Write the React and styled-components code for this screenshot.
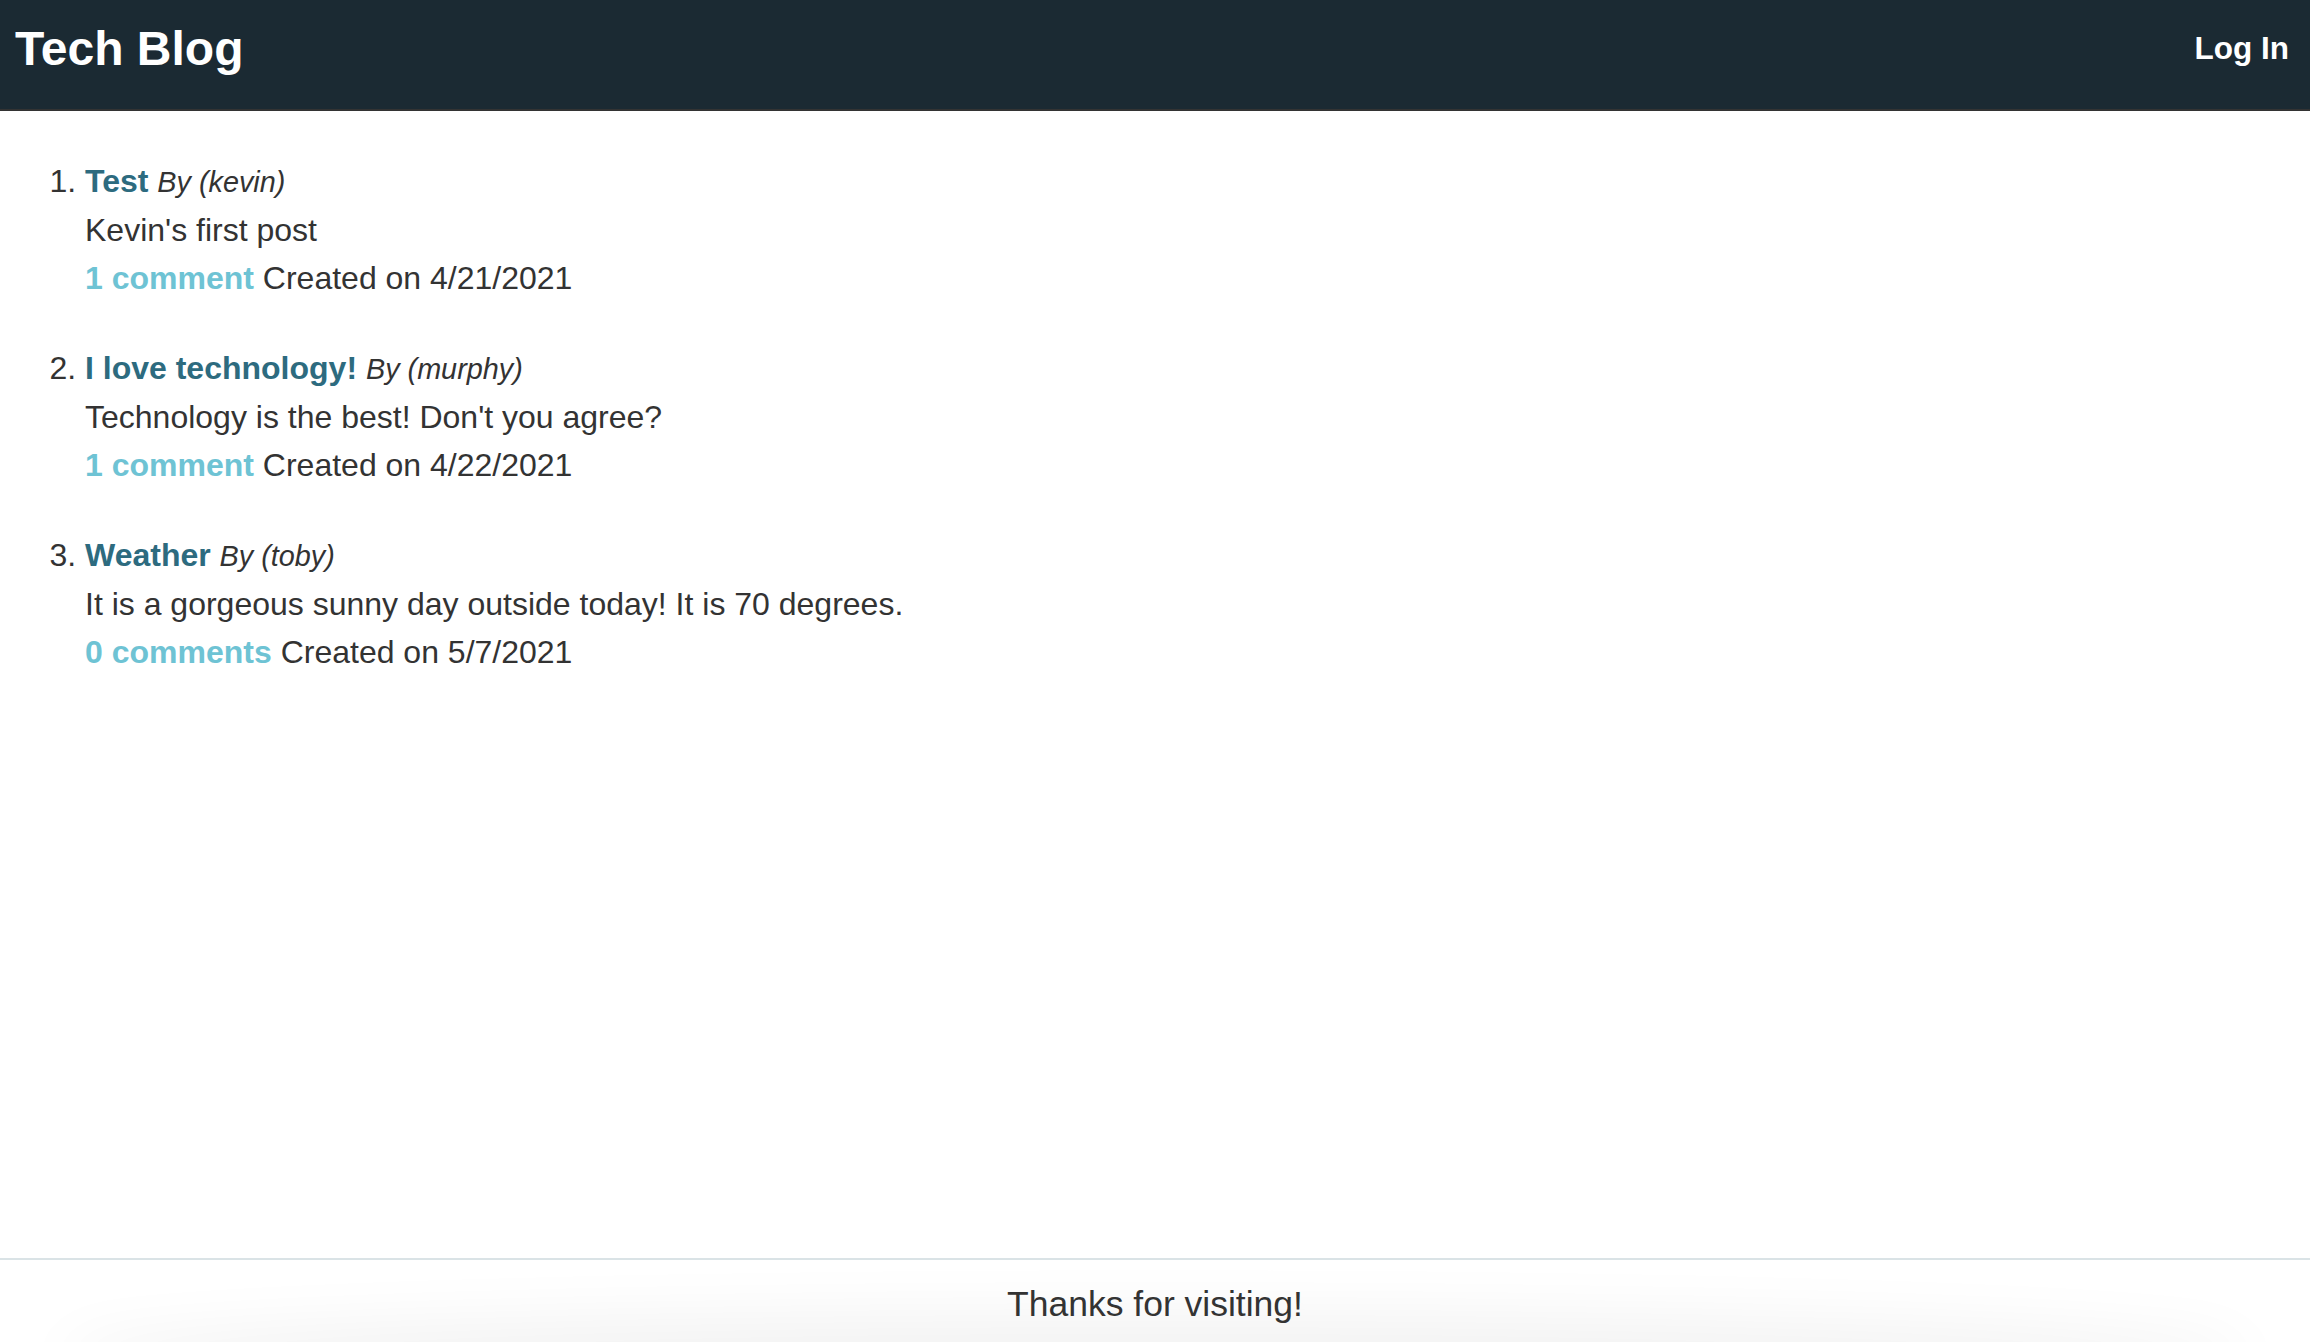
import React from 'react'
import styled, { createGlobalStyle } from "styled-components"

const posts = [
    { title: "Test", author: "kevin", body: "Kevin's first post", comments: 1, date: "4/21/2021" },
    { title: "I love technology!", author: "murphy", body: "Technology is the best! Don't you agree?", comments: 1, date: "4/22/2021" },
    { title: "Weather", author: "toby", body: "It is a gorgeous sunny day outside today! It is 70 degrees.", comments: 0, date: "5/7/2021" },
];

const GlobalStyle = createGlobalStyle`
    html, body {
        margin: 0;
        padding: 0;
        background: #fff;
    }
    body {
        font-family: "Liberation Sans", Arial, Helvetica, sans-serif;
        color: #333;
    }
`

const Page = styled.div`
    display: flex;
    flex-direction: column;
    height: 100vh;
    overflow: hidden;
`

const Header = styled.header`
    height: 111px;
    box-sizing: border-box;
    display: flex;
    align-items: center;
    justify-content: space-between;
    padding: 0 21px 13px 15px;
    background: #1b2a33;
    border-bottom: 2px solid #333;
`

const Brand = styled.a`
    color: #fff;
    font-size: 48px;
    font-weight: 700;
    text-decoration: none;
`

const NavLink = styled.a`
    color: #fff;
    font-size: 31.5px;
    font-weight: 700;
    text-decoration: none;
`

const Main = styled.main`
    flex: 1;
`

const PostList = styled.ol`
    margin: 46px 0 0;
    padding-left: 85px;
    font-size: 32px;
    line-height: 48px;
`

const PostItem = styled.li`
    margin-bottom: 42px;
`

const PostTitle = styled.a`
    color: #2d6b7f;
    font-weight: 700;
    text-decoration: none;
`

const Author = styled.em`
    font-size: 28.8px;
`

const Line = styled.div``

const CommentLink = styled.a`
    color: #6ec3d4;
    font-weight: 700;
    text-decoration: none;
`

const Footer = styled.footer`
    position: relative;
    height: 84px;
    box-sizing: border-box;
    flex-shrink: 0;
    display: flex;
    align-items: center;
    justify-content: center;
    padding-top: 6px;
    border-top: 2px solid #dae3e6;
    font-size: 35.5px;
    overflow: hidden;

    /* soft shade along the bottom edge */
    &::after {
        content: '';
        position: absolute;
        left: 90px;
        right: 90px;
        bottom: -30px;
        height: 30px;
        border-radius: 50%;
        box-shadow: 0 0 60px 30px rgba(0, 0, 0, 0.05);
    }
`

const FooterText = styled.span`
    position: relative;
    z-index: 1;
`

const App = () => {
    return (
        <Page>
            <GlobalStyle />
            <Header>
                <Brand href="#">Tech Blog</Brand>
                <NavLink href="#">Log In</NavLink>
            </Header>
            <Main>
                <PostList>
                    {posts.map((post, i) => (
                        <PostItem key={i}>
                            <Line>
                                <PostTitle href="#">{post.title}</PostTitle> <Author>By ({post.author})</Author>
                            </Line>
                            <Line>{post.body}</Line>
                            <Line>
                                <CommentLink href="#">
                                    {post.comments} {post.comments === 1 ? "comment" : "comments"}
                                </CommentLink> Created on {post.date}
                            </Line>
                        </PostItem>
                    ))}
                </PostList>
            </Main>
            <Footer>
                <FooterText>Thanks for visiting!</FooterText>
            </Footer>
        </Page>
    )
}

export default App
